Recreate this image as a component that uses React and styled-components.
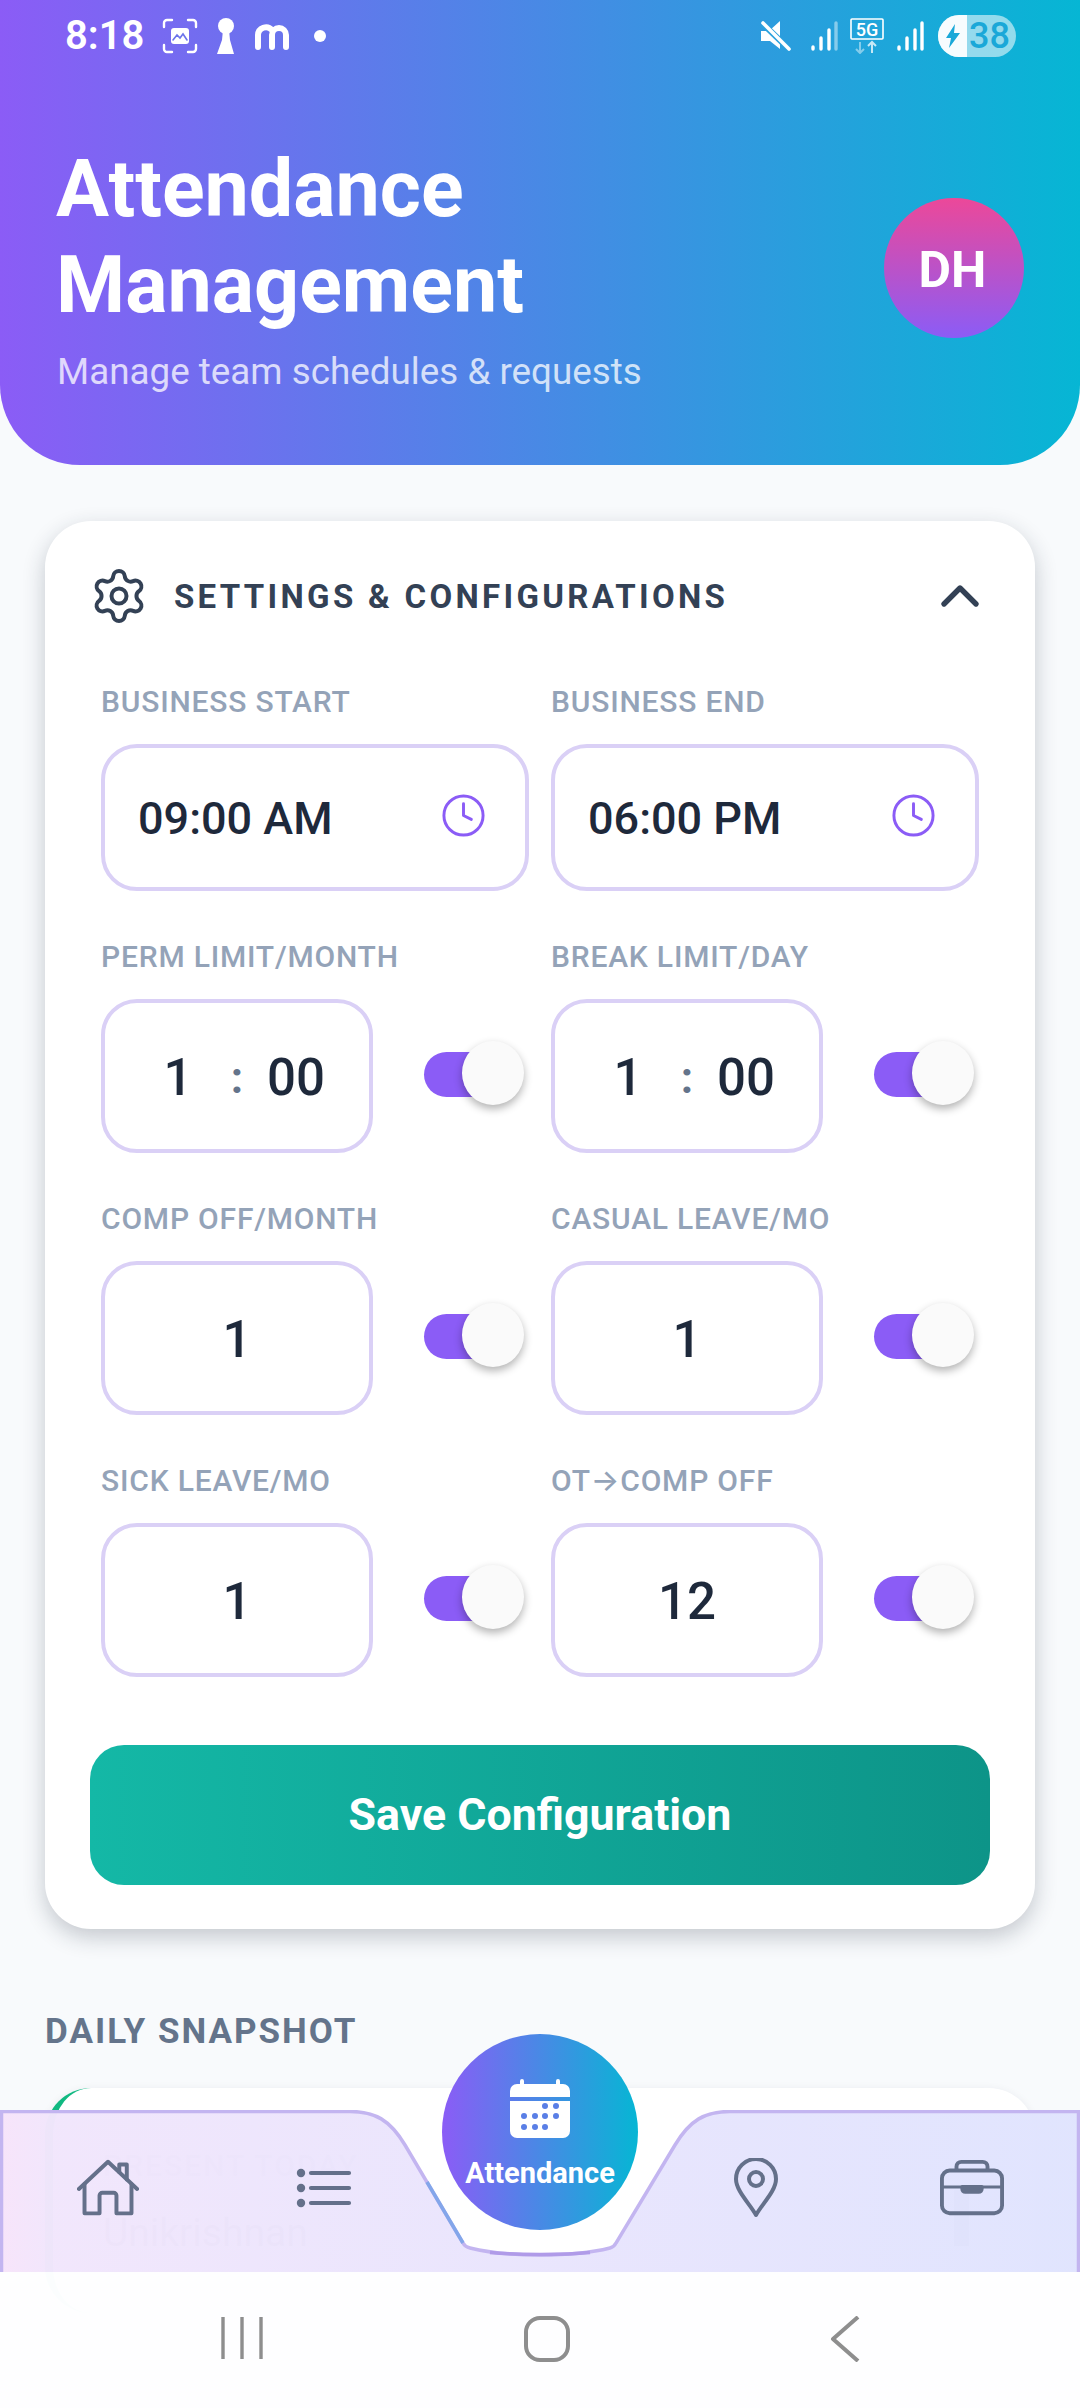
import styled, { createGlobalStyle } from 'styled-components';
import { Settings, ChevronUp, Clock } from 'lucide-react';

const GlobalStyle = createGlobalStyle`
  html, body {
    margin: 0;
    padding: 0;
    background: #f8fafc;
  }
  * {
    box-sizing: border-box;
  }
`;

const fields = [
  { label: 'PERM LIMIT/MONTH', time: true, value: '1' },
  { label: 'BREAK LIMIT/DAY', time: true, value: '1' },
  { label: 'COMP OFF/MONTH', value: '1' },
  { label: 'CASUAL LEAVE/MO', value: '1' },
  { label: 'SICK LEAVE/MO', value: '1' },
  { label: 'OT→COMP OFF', value: '12' },
];

const StatusBar = () => (
  <Status>
    <StatusGroup>
      <StatusTime>8:18</StatusTime>
      <svg width="36" height="36" viewBox="0 0 36 36" fill="none" stroke="#fff" strokeWidth="2.4" strokeLinecap="round">
        <path d="M2 9V5a3 3 0 0 1 3-3h5M26 2h5a3 3 0 0 1 3 3v4M34 27v4a3 3 0 0 1-3 3h-5M10 34H5a3 3 0 0 1-3-3v-4" />
        <rect x="9" y="10" width="18" height="16" rx="3" fill="#fff" stroke="none" />
        <path d="M11 22l4-5 3 3 3-4 4 6" stroke="#6b73ea" strokeWidth="1.6" />
      </svg>
      <svg width="20" height="36" viewBox="0 0 20 36" fill="#fff">
        <circle cx="10" cy="8" r="8" />
        <path d="M7 12h6l1 10 4 14H1l5-14z" />
      </svg>
      <svg width="36" height="28" viewBox="0 0 36 28" fill="none" stroke="#fff" strokeWidth="6" strokeLinecap="round">
        <path d="M4 25V13a8 8 0 0 1 14-5M18 25V13a7 7 0 0 1 14 0v12" />
      </svg>
      <StatusDot />
    </StatusGroup>
    <StatusGroup $right>
      <svg width="32" height="30" viewBox="0 0 32 30" fill="#fff">
        <path d="M1 10h8L20 0v28L10 20H1z" />
        <path d="M3 3l26 25" stroke="#2aa1dd" strokeWidth="6" />
        <path d="M3 2l26 26" stroke="#fff" strokeWidth="3.6" strokeLinecap="round" />
      </svg>
      <SignalIcon faded />
      <svg width="34" height="36" viewBox="0 0 34 36" fill="none" style={{ marginLeft: 12 }}>
        <rect x="1" y="1" width="32" height="20" rx="1" stroke="#fff" strokeWidth="1.6" />
        <text x="17" y="18" fontFamily="Roboto, sans-serif" fontSize="18" fontWeight="500" fill="#fff" textAnchor="middle">5G</text>
        <path d="M10 24v11M6 31l4 4 4-4" stroke="#fff" strokeOpacity=".45" strokeWidth="2" />
        <path d="M22 35V24M18 28l4-4 4 4" stroke="#fff" strokeOpacity=".75" strokeWidth="2" />
      </svg>
      <SignalIcon />
      <Battery>
        <BatteryFill>
          <svg width="16" height="24" viewBox="0 0 16 24" fill="#1aa8d8">
            <path d="M10 0L1 14h5l-2 10 11-15H9z" />
          </svg>
        </BatteryFill>
        <BatteryLevel>38</BatteryLevel>
      </Battery>
    </StatusGroup>
  </Status>
);

const SignalIcon = ({ faded }) => (
  <svg width="28" height="30" viewBox="0 0 28 30" fill="none" stroke="#fff" strokeWidth="3.4" strokeLinecap="round" style={{ marginLeft: faded ? 18 : 12 }}>
    <path d="M3 26v2M11 17v11M19 9v19" />
    <path d="M26 2v26" strokeOpacity={faded ? 0.45 : 1} />
  </svg>
);

const Toggle = () => (
  <Track>
    <Knob />
  </Track>
);

const HomeIcon = () => (
  <svg width="62" height="58" viewBox="0 0 66 60" fill="none" stroke="#64708a" strokeWidth="4.2" strokeLinecap="round" strokeLinejoin="round">
    <path d="M2 31L33 2l31 29" />
    <path d="M8 26v31h16V38a3 3 0 0 1 3-3h12a3 3 0 0 1 3 3v19h16V26" />
    <path d="M45 13V5h8v16" />
  </svg>
);

const ListIcon = () => (
  <svg width="56" height="44" viewBox="0 0 56 44" fill="#64708a" stroke="none">
    <circle cx="5" cy="7" r="4.2" />
    <circle cx="5" cy="22" r="4.2" />
    <circle cx="5" cy="37" r="4.2" />
    <path d="M15 7h38M15 22h38M15 37h38" stroke="#64708a" strokeWidth="4.2" strokeLinecap="round" />
  </svg>
);

const PinIcon = () => (
  <svg width="44" height="60" viewBox="0 0 44 60" fill="none" stroke="#64708a" strokeWidth="4" strokeLinejoin="round">
    <path d="M22 57C16 46 2 33 2 21a20 20 0 0 1 40 0c0 12-14 25-20 36z" />
    <circle cx="22" cy="21" r="7" />
  </svg>
);

const CaseIcon = () => (
  <svg width="64" height="58" viewBox="0 0 66 58" fill="none" stroke="#64708a" strokeWidth="4" strokeLinejoin="round">
    <rect x="2" y="11" width="62" height="44" rx="8" />
    <path d="M17 11V7a5 5 0 0 1 5-5h22a5 5 0 0 1 5 5v4" />
    <path d="M2 28h62" strokeWidth="3" />
    <path d="M23 28h20v2a3 3 0 0 1-3 3H26a3 3 0 0 1-3-3z" fill="#64708a" />
  </svg>
);

const CalendarIcon = () => (
  <svg width="60" height="60" viewBox="0 0 60 60" fill="#fff">
    <path d="M10 6V3a2 2 0 0 1 4 0v3h32V3a2 2 0 0 1 4 0v3h3a7 7 0 0 1 7 7v6H0v-6a7 7 0 0 1 7-7z" />
    <path d="M0 23h60v30a7 7 0 0 1-7 7H7a7 7 0 0 1-7-7z" />
    <g fill="#5a7fe6">
      <circle cx="35" cy="28" r="3" />
      <circle cx="46" cy="28" r="3" />
      <circle cx="14" cy="38" r="3" />
      <circle cx="25" cy="38" r="3" />
      <circle cx="35" cy="38" r="3" />
      <circle cx="46" cy="38" r="3" />
      <circle cx="14" cy="49" r="3" />
      <circle cx="25" cy="49" r="3" />
      <circle cx="35" cy="49" r="3" />
    </g>
  </svg>
);

const NavShape = () => (
  <NavSvg viewBox="0 0 1080 162" preserveAspectRatio="none">
    <defs>
      <linearGradient id="navFill" x1="0" y1="0" x2="1" y2="0">
        <stop offset="0" stopColor="#f7e4fa" />
        <stop offset="0.05" stopColor="#f1e6fc" />
        <stop offset="0.5" stopColor="#e9e5fd" />
        <stop offset="1" stopColor="#e0e4fe" />
      </linearGradient>
    </defs>
    <path
      d="M0 1H350C375 1 390 10 405 35L463 133Q465 137 470 138C490 143 515 145 540 145C565 145 590 143 610 138Q614 137 616 133L675 35C690 10 705 1 730 1H1080V162H0Z"
      fill="url(#navFill)"
      fillOpacity="0.985"
    />
    <path
      d="M1.5 162V1.5H350C375 1.5 390 10 405 35L463 133Q465 137 470 138C490 143 515 145 540 145C565 145 590 143 610 138Q614 137 616 133L675 35C690 10 705 1.5 730 1.5H1078.5V162"
      fill="none"
      stroke="#c3b5f0"
      strokeWidth="3.5"
    />
    <path d="M427 72L463 133" fill="none" stroke="#83a6ea" strokeWidth="3.5" />
    <path d="M490 142.500C515 145 565 145 590 142.500" fill="none" stroke="#b09be8" strokeWidth="3.5" />
  </NavSvg>
);

const App = () => {
  return (
    <Page>
      <GlobalStyle />
      <Header>
        <StatusBar />
        <HeaderMain>
          <div>
            <Title>
              Attendance
              <br />
              Management
            </Title>
            <Subtitle>Manage team schedules &amp; requests</Subtitle>
          </div>
          <Avatar>DH</Avatar>
        </HeaderMain>
      </Header>

      <Content>
        <Card>
          <CardHead>
            <CardTitle>
              <Settings size={60} strokeWidth={1.6} color="#334155" />
              <span>SETTINGS &amp; CONFIGURATIONS</span>
            </CardTitle>
            <ChevronUp size={64} strokeWidth={2} color="#334155" />
          </CardHead>

          <FieldGrid>
            <Field>
              <Label>BUSINESS START</Label>
              <TimeBox>
                <BoxValue>09:00 AM</BoxValue>
                <ClockIcon size={47} strokeWidth={1.5} color="#8b5cf6" />
              </TimeBox>
            </Field>
            <Field>
              <Label>BUSINESS END</Label>
              <TimeBox>
                <BoxValue>06:00 PM</BoxValue>
                <ClockIcon size={47} strokeWidth={1.5} color="#8b5cf6" />
              </TimeBox>
            </Field>
            {fields.map((item) => (
              <Field key={item.label}>
                <Label>{item.label}</Label>
                <FieldRow>
                  {item.time ? (
                    <NumberBox>
                      <Split>
                        <NumValue>{item.value}</NumValue>
                        <Colon>:</Colon>
                        <NumValue>00</NumValue>
                      </Split>
                    </NumberBox>
                  ) : (
                    <NumberBox>
                      <NumValue>{item.value}</NumValue>
                    </NumberBox>
                  )}
                  <Toggle />
                </FieldRow>
              </Field>
            ))}
          </FieldGrid>

          <SaveButton>Save Configuration</SaveButton>
        </Card>

        <SectionTitle>DAILY SNAPSHOT</SectionTitle>
        <SnapshotCard>
          <div>
            <SnapLabel>PRESENT TODAY</SnapLabel>
            <SnapName>Unikrishnan</SnapName>
          </div>
          <SnapBar />
        </SnapshotCard>
      </Content>

      <BottomArea>
        <Nav>
          <NavShape />
          <NavItem><HomeIcon /></NavItem>
          <NavItem><ListIcon /></NavItem>
          <span />
          <NavItem><PinIcon /></NavItem>
          <NavItem><CaseIcon /></NavItem>
          <Fab>
            <CalendarIcon />
            <FabLabel>Attendance</FabLabel>
          </Fab>
        </Nav>
        <SystemBar>
          <svg width="44" height="44" viewBox="0 0 44 44" fill="none" stroke="#8e8e8e" strokeWidth="3.4">
            <path d="M3 1v42M22 1v42M41 1v42" />
          </svg>
          <svg width="46" height="46" viewBox="0 0 46 46" fill="none" stroke="#8e8e8e" strokeWidth="4">
            <rect x="2" y="2" width="42" height="42" rx="14" />
          </svg>
          <svg width="30" height="46" viewBox="0 0 30 46" fill="none" stroke="#8e8e8e" strokeWidth="4" strokeLinejoin="round">
            <path d="M28 1L3 23l25 22" />
          </svg>
        </SystemBar>
      </BottomArea>
    </Page>
  );
};

export default App;

const Page = styled.div`
  position: relative;
  width: 1080px;
  height: 2408px;
  overflow: hidden;
  background: #f8fafc;
  font-family: Roboto, Inter, 'Liberation Sans', sans-serif;
`;

const Header = styled.header`
  height: 465px;
  background: linear-gradient(90deg, #8b5cf6, #06b6d4);
  border-radius: 0 0 80px 80px;
  color: #fff;
`;

const Status = styled.div`
  height: 72px;
  padding: 0 64px 0 65px;
  display: flex;
  align-items: center;
  justify-content: space-between;
`;

const StatusGroup = styled.div`
  display: flex;
  align-items: center;
  gap: ${(props) => (props.$right ? '0' : '18px')};
`;

const StatusTime = styled.span`
  font-size: 40px;
  font-weight: 600;
  line-height: 1;
`;

const StatusDot = styled.i`
  width: 12px;
  height: 12px;
  margin-left: 6px;
  border-radius: 50%;
  background: #fff;
`;

const Battery = styled.div`
  position: relative;
  width: 78px;
  height: 42px;
  margin-left: 14px;
  border-radius: 21px;
  overflow: hidden;
  background: rgba(255, 255, 255, 0.55);
  display: flex;
  align-items: center;
`;

const BatteryFill = styled.div`
  width: 29px;
  height: 100%;
  padding-left: 7px;
  background: rgba(255, 255, 255, 0.92);
  display: flex;
  align-items: center;
`;

const BatteryLevel = styled.span`
  margin-left: 2px;
  font-size: 36px;
  font-weight: 500;
  color: #1aa8d8;
`;

const HeaderMain = styled.div`
  margin-top: 69px;
  padding: 0 56px 0 57px;
  display: flex;
  align-items: center;
  justify-content: space-between;
`;

const Title = styled.h1`
  margin: 0 0 0 -1px;
  font-size: 79px;
  line-height: 96px;
  font-weight: 700;
`;

const Subtitle = styled.p`
  margin: 16px 0 0;
  font-size: 36.800px;
  line-height: 46px;
  color: rgba(255, 255, 255, 0.75);
`;

const Avatar = styled.div`
  width: 140px;
  height: 140px;
  padding-top: 3px;
  padding-right: 3px;
  border-radius: 50%;
  background: linear-gradient(180deg, #ec4899, #8b5cf6);
  display: flex;
  align-items: center;
  justify-content: center;
  font-size: 50px;
  font-weight: 700;
`;

const Content = styled.main`
  padding: 56px 45px 0;
`;

const Card = styled.section`
  height: 1408px;
  padding: 45px;
  background: #fff;
  border-radius: 46px;
  box-shadow: 0 8px 22px rgba(30, 41, 59, 0.24);
`;

const CardHead = styled.div`
  height: 60px;
  display: flex;
  align-items: center;
  justify-content: space-between;
  margin-right: -2px;
`;

const CardTitle = styled.div`
  display: flex;
  align-items: center;
  gap: 25px;
  margin-left: -1px;
  font-size: 33px;
  font-weight: 700;
  letter-spacing: 3.3px;
  color: #334155;
`;

const FieldGrid = styled.div`
  margin-top: 59px;
  padding: 0 11px;
  display: grid;
  grid-template-columns: 428px 428px;
  column-gap: 22px;
  row-gap: 49px;
`;

const Field = styled.div`
  min-width: 0;
`;

const Label = styled.div`
  margin-bottom: 25px;
  font-size: 30px;
  line-height: 34px;
  font-weight: 500;
  letter-spacing: 0.8px;
  color: #94a3b8;
`;

const TimeBox = styled.div`
  height: 147px;
  padding: 0 38px 0 33px;
  border: 4px solid #dad0f6;
  border-radius: 36px;
  background: #fff;
  display: flex;
  align-items: center;
  justify-content: space-between;
`;

const BoxValue = styled.span`
  margin-top: 2px;
  font-size: 45px;
  font-weight: 500;
  color: #1e293b;
`;

const ClockIcon = styled(Clock)`
  margin-top: -4px;
`;

const FieldRow = styled.div`
  display: flex;
  align-items: center;
  gap: 51px;
`;

const NumberBox = styled.div`
  width: 272px;
  height: 154px;
  padding-top: 3px;
  border: 4px solid #dad0f6;
  border-radius: 36px;
  background: #fff;
  display: flex;
  align-items: center;
  justify-content: center;
`;

const Split = styled.div`
  display: grid;
  grid-template-columns: 100px 18px 100px;
  align-items: center;
  justify-items: center;
`;

const NumValue = styled.span`
  font-size: 51px;
  font-weight: 500;
  color: #1e293b;
`;

const Colon = styled.span`
  font-size: 44px;
  font-weight: 700;
  color: #64748b;
`;

const Track = styled.div`
  position: relative;
  width: 86px;
  height: 45px;
  margin-top: -4px;
  border-radius: 23px;
  background: #8b5cf6;
`;

const Knob = styled.div`
  position: absolute;
  top: -11px;
  left: 38px;
  width: 62px;
  height: 64px;
  border-radius: 50%;
  background: #fafafa;
  box-shadow: 0 4px 8px rgba(0, 0, 0, 0.3);
`;

const SaveButton = styled.button`
  display: block;
  width: 100%;
  height: 140px;
  margin-top: 68px;
  border: 0;
  border-radius: 34px;
  background: linear-gradient(90deg, #14b8a6, #0d9488);
  color: #fff;
  font-family: inherit;
  font-size: 44.700px;
  font-weight: 700;
`;

const SectionTitle = styled.h2`
  margin: 83px 0 0;
  font-size: 35px;
  line-height: 40px;
  font-weight: 700;
  letter-spacing: 2px;
  color: #64748b;
`;

const SnapshotCard = styled.section`
  height: 225px;
  margin-top: 36px;
  padding: 58px 66px 0 50px;
  background: #fff;
  border-left: 8px solid #10b981;
  border-radius: 46px;
  box-shadow: 0 2px 10px rgba(30, 41, 59, 0.08);
  display: flex;
  justify-content: space-between;
`;

const SnapLabel = styled.div`
  font-size: 30px;
  line-height: 40px;
  font-weight: 500;
  letter-spacing: 2px;
  color: #94a3b8;
`;

const SnapName = styled.div`
  margin-top: 22px;
  font-size: 39px;
  line-height: 50px;
  color: #475569;
`;

const SnapBar = styled.div`
  width: 15px;
  height: 56px;
  margin-top: 44px;
  background: #64708a;
`;

const BottomArea = styled.div`
  position: absolute;
  left: 0;
  right: 0;
  bottom: 0;
  height: 298px;
`;

const Nav = styled.nav`
  position: relative;
  height: 162px;
  padding-bottom: 6px;
  display: grid;
  grid-template-columns: repeat(5, 216px);
  align-items: center;
  justify-items: center;
`;

const NavSvg = styled.svg`
  position: absolute;
  inset: 0;
  width: 100%;
  height: 100%;
`;

const NavItem = styled.div`
  position: relative;
  display: flex;
  align-items: center;
  justify-content: center;
`;

const Fab = styled.div`
  position: absolute;
  left: 442px;
  top: -76px;
  width: 196px;
  height: 196px;
  padding-top: 44px;
  border-radius: 50%;
  background: linear-gradient(90deg, #8b5cf6, #06b6d4);
  display: flex;
  flex-direction: column;
  align-items: center;
`;

const FabLabel = styled.span`
  margin-top: 17px;
  font-size: 29px;
  line-height: 36px;
  font-weight: 700;
  color: #fff;
`;

const SystemBar = styled.div`
  height: 136px;
  background: rgba(254, 254, 255, 0.99);
  padding: 44px 220px 0 220px;
  display: flex;
  align-items: flex-start;
  justify-content: space-between;
`;
